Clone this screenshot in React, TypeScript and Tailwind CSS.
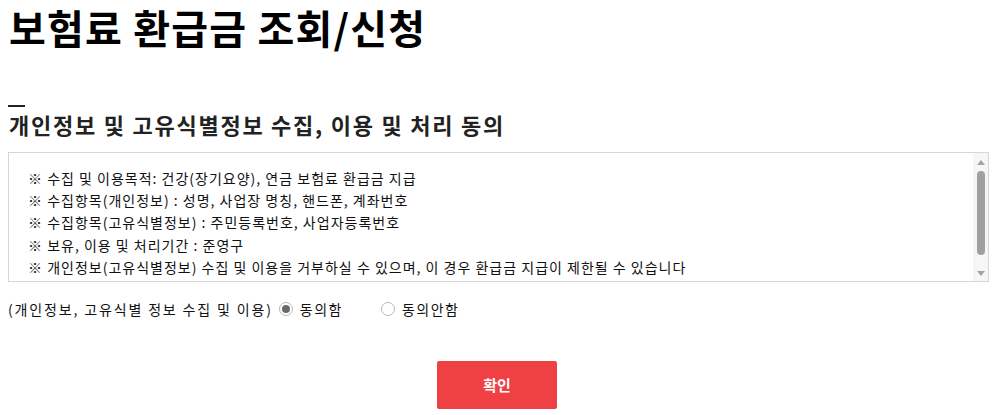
import React, { useState } from 'react';

const font = { fontFamily: '"Noto Sans CJK KR", "Noto Sans", sans-serif' };

const terms = [
  '※ 수집 및 이용목적: 건강(장기요양), 연금 보험료 환급금 지급',
  '※ 수집항목(개인정보) : 성명, 사업장 명칭, 핸드폰, 계좌번호',
  '※ 수집항목(고유식별정보) : 주민등록번호, 사업자등록번호',
  '※ 보유, 이용 및 처리기간 : 준영구',
  '※ 개인정보(고유식별정보) 수집 및 이용을 거부하실 수 있으며, 이 경우 환급금 지급이 제한될 수 있습니다',
];

function Radio({ checked, label, onClick }: { checked: boolean; label: string; onClick: () => void }) {
  return (
    <label className="flex items-center gap-[7px] cursor-pointer" onClick={onClick}>
      <span className="w-[14px] h-[14px] rounded-full border border-[#b8b8b8] bg-white flex items-center justify-center">
        {checked && <span className="w-[8px] h-[8px] rounded-full bg-[#6e6766]" />}
      </span>
      <span className="tracking-[1.5px]">{label}</span>
    </label>
  );
}

export default function App() {
  const [agree, setAgree] = useState(true);

  return (
    <div className="min-h-screen bg-white text-black pl-2 pr-1 pt-px" style={font}>
      <h1 className="text-[40px] font-bold leading-[58px] -mt-[3px] pl-[1px] tracking-[1.2px]">보험료 환급금 조회/신청</h1>

      <div className="mt-[49px] w-[17px] h-[2px] bg-[#222]" />
      <h2 className="text-[22px] font-bold text-[#222] leading-[30px] mt-[2px] pl-[1px] tracking-[1.75px]">
        개인정보 및 고유식별정보 수집, 이용 및 처리 동의
      </h2>

      <div className="mt-[13px] h-[130px] border border-[#d6d6d6] flex">
        <div className="flex-1 overflow-hidden pt-[14px] pl-[19px] text-[14px] leading-[22.2px] text-[#111] tracking-[1px]">
          {terms.map((t) => (
            <p key={t} className="whitespace-nowrap">{t}</p>
          ))}
        </div>
        {/* scrollbar */}
        <div className="w-[15px] bg-[#f6f6f6] flex flex-col items-center pt-[7px] pb-[5px]">
          <svg width="8" height="5" viewBox="0 0 8 5">
            <path d="M4 0L8 5H0z" fill="#a3a3a3" />
          </svg>
          <div className="mt-[6px] w-[8px] h-[84px] rounded-full bg-[#a0a0a0]" />
          <div className="flex-1" />
          <svg width="8" height="5" viewBox="0 0 8 5">
            <path d="M0 0H8L4 5z" fill="#a3a3a3" />
          </svg>
        </div>
      </div>

      <div className="mt-[16px] flex items-center text-[14px] text-[#111] leading-[22px]">
        <span className="mr-[6px] tracking-[1.85px]">(개인정보, 고유식별 정보 수집 및 이용)</span>
        <Radio checked={agree} label="동의함" onClick={() => setAgree(true)} />
        <span className="w-[38px]" />
        <Radio checked={!agree} label="동의안함" onClick={() => setAgree(false)} />
      </div>

      <div className="mt-[41px] flex justify-center pr-[3px]">
        <button className="w-[120px] h-[48px] rounded-[2px] bg-[#ef4044] text-white text-[15px] font-bold">
          확인
        </button>
      </div>
    </div>
  );
}
